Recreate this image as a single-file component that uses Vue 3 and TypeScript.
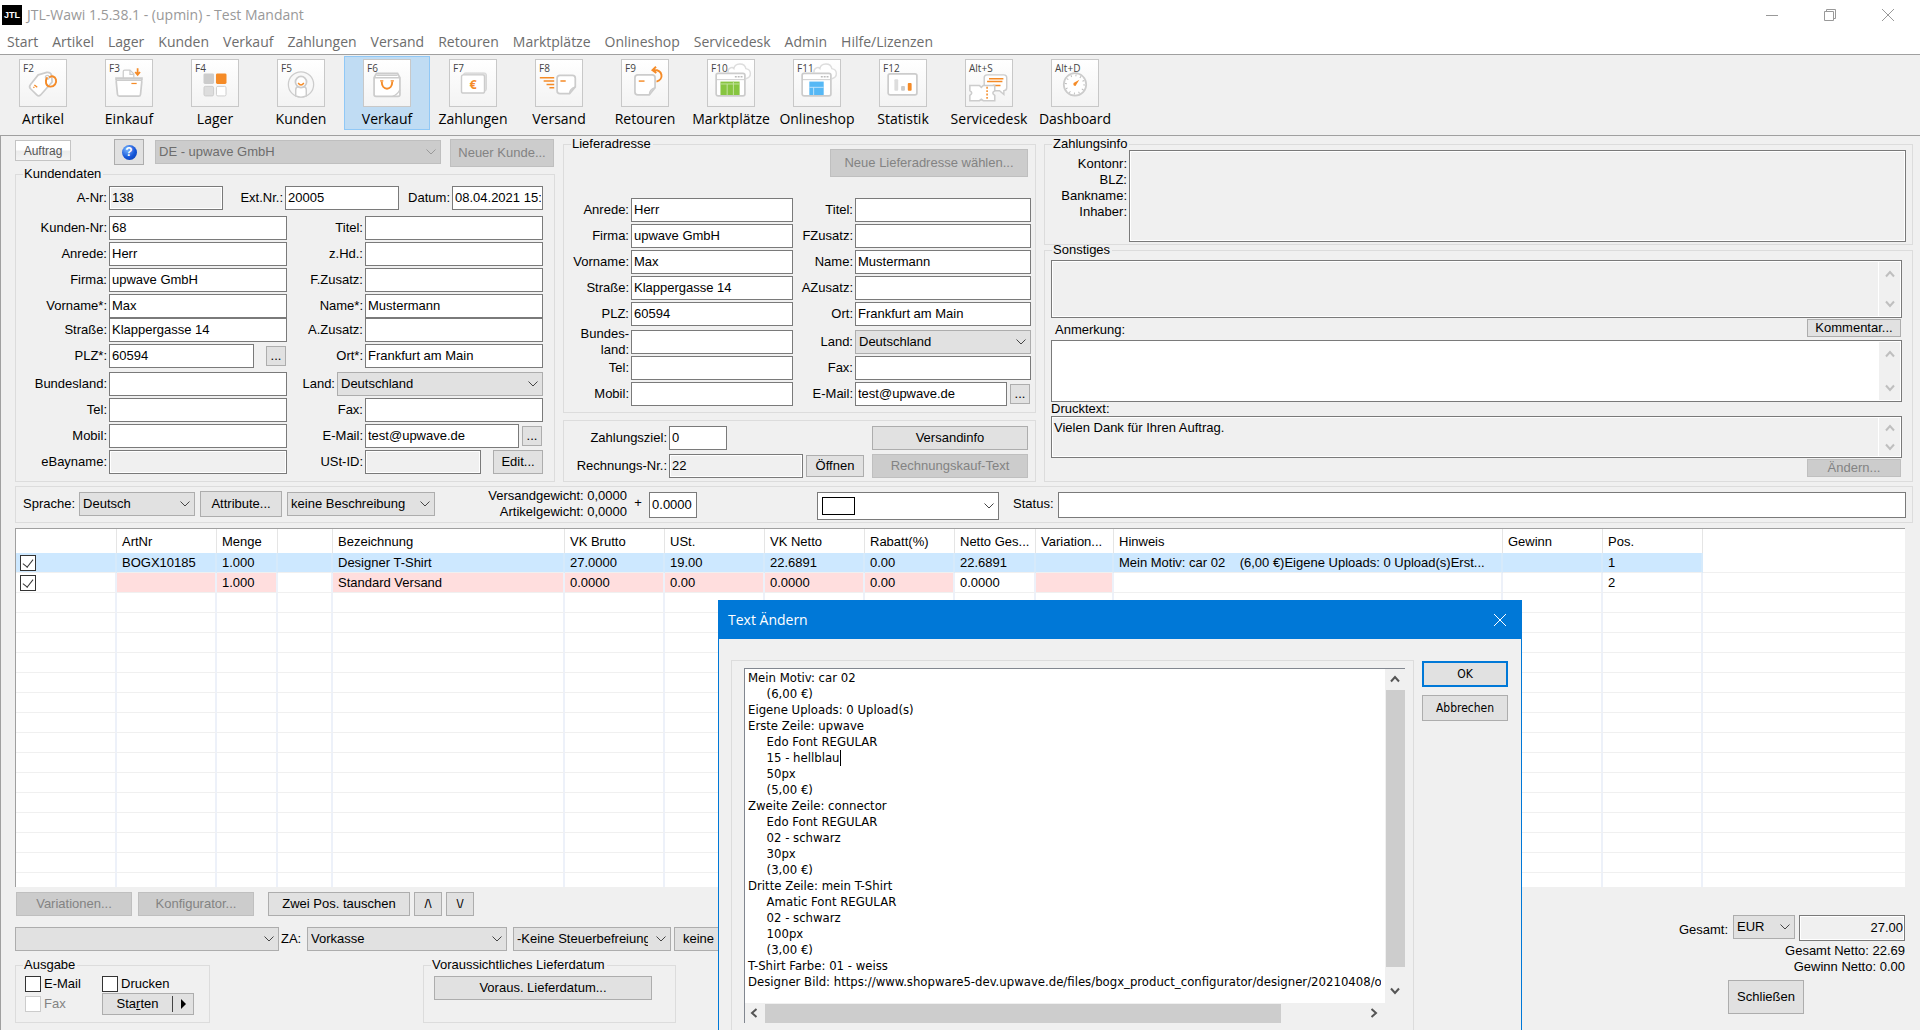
<script setup lang="ts">
import { ref } from 'vue'

interface Field {
  id: string
  label: string
  value?: string
  kind?: 'text' | 'readonly' | 'select'
  size?: string
  button?: string
  buttonLabel?: string
}

interface Tool {
  key: string
  label: string
  icon: string
  active?: boolean
}

interface Position {
  cells: string[]
  selected?: boolean
}

const menu = ['Start', 'Artikel', 'Lager', 'Kunden', 'Verkauf', 'Zahlungen', 'Versand', 'Retouren', 'Marktplätze', 'Onlineshop', 'Servicedesk', 'Admin', 'Hilfe/Lizenzen']

const tools: Tool[] = [
  { key: 'F2', label: 'Artikel', icon: 'artikel' },
  { key: 'F3', label: 'Einkauf', icon: 'einkauf' },
  { key: 'F4', label: 'Lager', icon: 'lager' },
  { key: 'F5', label: 'Kunden', icon: 'kunden' },
  { key: 'F6', label: 'Verkauf', icon: 'verkauf', active: true },
  { key: 'F7', label: 'Zahlungen', icon: 'zahlungen' },
  { key: 'F8', label: 'Versand', icon: 'versand' },
  { key: 'F9', label: 'Retouren', icon: 'retouren' },
  { key: 'F10', label: 'Marktplätze', icon: 'markt' },
  { key: 'F11', label: 'Onlineshop', icon: 'shop' },
  { key: 'F12', label: 'Statistik', icon: 'statistik' },
  { key: 'Alt+S', label: 'Servicedesk', icon: 'service' },
  { key: 'Alt+D', label: 'Dashboard', icon: 'dashboard' },
]

const customer: Field[] = [
  { id: 'k-nr', label: 'Kunden-Nr:', value: '68' },
  { id: 'k-titel', label: 'Titel:' },
  { id: 'k-anrede', label: 'Anrede:', value: 'Herr' },
  { id: 'k-zhd', label: 'z.Hd.:' },
  { id: 'k-firma', label: 'Firma:', value: 'upwave GmbH' },
  { id: 'k-fzusatz', label: 'F.Zusatz:' },
  { id: 'k-vorname', label: 'Vorname*:', value: 'Max' },
  { id: 'k-name', label: 'Name*:', value: 'Mustermann' },
  { id: 'k-strasse', label: 'Straße:', value: 'Klappergasse 14' },
  { id: 'k-azusatz', label: 'A.Zusatz:' },
  { id: 'k-plz', label: 'PLZ*:', value: '60594', size: 'loose', button: '...', buttonLabel: 'PLZ suchen' },
  { id: 'k-ort', label: 'Ort*:', value: 'Frankfurt am Main' },
  { id: 'k-bundesland', label: 'Bundesland:' },
  { id: 'k-land', label: 'Land:', value: 'Deutschland', kind: 'select', size: 'wide' },
  { id: 'k-tel', label: 'Tel:' },
  { id: 'k-fax', label: 'Fax:' },
  { id: 'k-mobil', label: 'Mobil:' },
  { id: 'k-mail', label: 'E-Mail:', value: 'test@upwave.de', button: '...', buttonLabel: 'E-Mail schreiben' },
  { id: 'k-ebay', label: 'eBayname:', kind: 'readonly' },
  { id: 'k-ust', label: 'USt-ID:', kind: 'readonly', size: 'loose', button: 'Edit...', buttonLabel: 'USt-ID bearbeiten' },
]

const delivery: Field[] = [
  { id: 'l-anrede', label: 'Anrede:', value: 'Herr' },
  { id: 'l-titel', label: 'Titel:' },
  { id: 'l-firma', label: 'Firma:', value: 'upwave GmbH' },
  { id: 'l-fzusatz', label: 'FZusatz:' },
  { id: 'l-vorname', label: 'Vorname:', value: 'Max' },
  { id: 'l-name', label: 'Name:', value: 'Mustermann' },
  { id: 'l-strasse', label: 'Straße:', value: 'Klappergasse 14' },
  { id: 'l-azusatz', label: 'AZusatz:' },
  { id: 'l-plz', label: 'PLZ:', value: '60594' },
  { id: 'l-ort', label: 'Ort:', value: 'Frankfurt am Main' },
  { id: 'l-bundesland', label: 'Bundes-\nland:' },
  { id: 'l-land', label: 'Land:', value: 'Deutschland', kind: 'select' },
  { id: 'l-tel', label: 'Tel:' },
  { id: 'l-fax', label: 'Fax:' },
  { id: 'l-mobil', label: 'Mobil:' },
  { id: 'l-mail', label: 'E-Mail:', value: 'test@upwave.de', button: '...', buttonLabel: 'E-Mail schreiben' },
]

const columns = [
  { title: '', width: 101 },
  { title: 'ArtNr', width: 100 },
  { title: 'Menge', width: 61 },
  { title: '', width: 55 },
  { title: 'Bezeichnung', width: 232 },
  { title: 'VK Brutto', width: 100 },
  { title: 'USt.', width: 100 },
  { title: 'VK Netto', width: 100 },
  { title: 'Rabatt(%)', width: 90 },
  { title: 'Netto Ges...', width: 81 },
  { title: 'Variation...', width: 78 },
  { title: 'Hinweis', width: 389 },
  { title: 'Gewinn', width: 100 },
  { title: 'Pos.', width: 100 },
]

const positions: Position[] = [
  {
    selected: true,
    cells: ['BOGX10185', '1.000', '', 'Designer T-Shirt', '27.0000', '19.00', '22.6891', '0.00', '22.6891', '', 'Mein Motiv: car 02    (6,00 €)Eigene Uploads: 0 Upload(s)Erst...', '', '1'],
  },
  {
    cells: ['', '1.000', '', 'Standard Versand', '0.0000', '0.00', '0.0000', '0.00', '0.0000', '', '', '', '2'],
  },
]
const lockedCells = [0, 1, 3, 4, 5, 6, 7, 9]

const checked = ref([true, true])
const outMail = ref(false)
const outPrint = ref(false)

const note = ref(`Mein Motiv: car 02
     (6,00 €)
Eigene Uploads: 0 Upload(s)
Erste Zeile: upwave
     Edo Font REGULAR
     15 - hellblau
     50px
     (5,00 €)
Zweite Zeile: connector
     Edo Font REGULAR
     02 - schwarz
     30px
     (3,00 €)
Dritte Zeile: mein T-Shirt
     Amatic Font REGULAR
     02 - schwarz
     100px
     (3,00 €)
T-Shirt Farbe: 01 - weiss
Designer Bild: https://www.shopware5-dev.upwave.de/files/bogx_product_configurator/designer/20210408/order`)
</script>

<template>
  <div class="app">
    <svg class="defs" aria-hidden="true">
      <symbol id="chev" viewBox="0 0 10 6"><path d="M.5.5 5 5 9.5.5" fill="none" stroke="currentColor" /></symbol>
      <symbol id="arrow" viewBox="0 0 10 8"><path d="M1 6.500 5 2 9 6.500" fill="none" stroke="currentColor" stroke-width="2" /></symbol>
      <symbol id="cloud" viewBox="0 0 48 48">
        <path d="M21 13c-1-4 4-6.500 6-4 1-6 11-7 12.500 0 6 1 6.500 9 0 10.500" fill="#fff" stroke="#ddd" stroke-width="1.500" />
      </symbol>
      <symbol id="artikel" viewBox="0 0 48 48">
        <path d="M19 15.500 28 13q4-.5 5 3l.5 7L21.500 36.500q-2 2-4 0L11 30q-2-2 0-4.500z" fill="#fff" stroke="#ccc" stroke-width="1.800" />
        <circle cx="28.500" cy="18" r="2" fill="none" stroke="#ccc" stroke-width="1.300" />
        <path d="M28.500 18c-3 4-1.500 9.500 3 9.800 4.500.3 7-4 6-7.500-1-3-4.500-4.500-7-2" fill="none" stroke="#f58b27" stroke-width="2" />
        <path d="m15 26 3 2.500M14 28l1 1" stroke="#f58b27" stroke-width="1.300" />
      </symbol>
      <symbol id="einkauf" viewBox="0 0 48 48">
        <path d="M18 21V12q0-1.500 1.500-1.500H25l4 4V21z" fill="#fff" stroke="#ccc" stroke-width="1.300" />
        <path d="M25 10.500V15h4" fill="none" stroke="#ccc" stroke-width="1.300" />
        <path d="M10.500 21v-2h27v2M12 21h24q1.500 0 1.300 2L36 36q-.2 1.800-2 1.800H14q-1.800 0-2-1.800l-1.300-13q-.2-2 1.300-2z" fill="#fff" stroke="#ccc" stroke-width="1.800" />
        <path d="M33 8.500v6M30.500 12.500 33 15.500l2.500-3" fill="none" stroke="#f58b27" stroke-width="1.800" />
        <path d="M26.500 24.500h5.500" stroke="#f58b27" stroke-width="1.300" />
      </symbol>
      <symbol id="lager" viewBox="0 0 48 48">
        <rect x="12" y="14" width="11" height="11" rx="1.500" fill="#ccc" />
        <rect x="25" y="14" width="11" height="11" rx="1.500" fill="#f58b27" />
        <rect x="12.500" y="27.500" width="10" height="10" rx="1.500" fill="#ddd" stroke="#ccc" />
        <rect x="25.500" y="27.500" width="10" height="10" rx="1.500" fill="#fff" stroke="#ccc" />
      </symbol>
      <symbol id="kunden" viewBox="0 0 48 48">
        <circle cx="24" cy="25.500" r="13.200" fill="#f8f8f8" stroke="#ccc" stroke-width="1.300" />
        <path d="M18.500 37.500V31q0-3 3-3h5q3 0 3 3v6.500q-5.500 2.500-11 0z" fill="#fff" stroke="#ccc" stroke-width="1.500" />
        <circle cx="24" cy="23" r="5.800" fill="#fff" stroke="#ccc" stroke-width="1.800" />
        <path d="M21 24q3 4 6 0" fill="none" stroke="#f58b27" stroke-width="1.500" />
      </symbol>
      <symbol id="verkauf" viewBox="0 0 48 48">
        <path d="M10.500 18.500 13 14h22l2.500 4.500V36q0 2-2 2h-23q-2 0-2-2z" fill="#fff" stroke="#ccc" stroke-width="1.800" />
        <path d="M10.500 18.500h27M13 16h22" stroke="#ccc" stroke-width="1.500" />
        <path d="M30 38q5-2 7.500-7" fill="none" stroke="#ccc" stroke-width="1.500" />
        <path d="M18.500 22.500c0 10 11 10 11 0" fill="none" stroke="#f58b27" stroke-width="2" />
        <path d="M16.800 21.800h3.400M27.800 21.800h3.400" stroke="#f58b27" stroke-width="1.500" />
      </symbol>
      <symbol id="zahlungen" viewBox="0 0 48 48">
        <rect x="14" y="13.500" width="24" height="19" rx="2" fill="#e2e2e2" stroke="#d4d4d4" />
        <rect x="12" y="15.500" width="24" height="19" rx="2" fill="#fff" stroke="#ccc" stroke-width="1.500" />
        <text x="24" y="30" text-anchor="middle" font-family="Open Sans, sans-serif" font-weight="700" font-size="13" fill="#f58b27">€</text>
      </symbol>
      <symbol id="versand" viewBox="0 0 48 48">
        <path d="M25 16h13q3 0 3 3v9l-6 7H25q-3 0-3-3V19q0-3 3-3z" fill="#fff" stroke="#ccc" stroke-width="1.800" />
        <path d="M35 35q0-5 6-7" fill="none" stroke="#ccc" stroke-width="1.500" />
        <path d="M4 18.500h15M8 22h11M11 25.500h8M14 29h5M25.500 22h5.500" stroke="#f58b27" stroke-width="1.600" />
      </symbol>
      <symbol id="retouren" viewBox="0 0 48 48">
        <path d="M16.500 15.500h15q3 0 3 3V29l-6 7.500h-12q-3 0-3-3v-15q0-3 3-3z" fill="#fff" stroke="#ccc" stroke-width="1.800" />
        <path d="M28.500 36.500q0-5.500 6-7.500" fill="none" stroke="#ccc" stroke-width="1.500" />
        <path d="M17.500 22h6" stroke="#f58b27" stroke-width="1.500" />
        <path d="M32 10.500c11-1 12 10 4 12M35.500 7 31.800 10.500l4 3" fill="none" stroke="#f58b27" stroke-width="2" />
      </symbol>
      <symbol id="markt" viewBox="0 0 48 48">
        <use href="#cloud" />
        <rect x="8.500" y="14" width="30" height="23.500" rx="2" fill="#fff" stroke="#ccc" stroke-width="1.800" />
        <path d="M8.500 20.500h30" stroke="#ccc" /><path d="M28 17.500h2m1 0h2m1 0h2" stroke="#bbb" stroke-width="1.500" />
        <path d="M13 22.500h20v14H13z" fill="#87c540" /><path d="M13 25h20M20 25v12M26.500 22v15" stroke="#c5e3a2" />
      </symbol>
      <symbol id="shop" viewBox="0 0 48 48">
        <use href="#cloud" />
        <rect x="8.500" y="14" width="30" height="23.500" rx="2" fill="#fff" stroke="#ccc" stroke-width="1.800" />
        <path d="M8.500 20.500h30" stroke="#ccc" /><path d="M28 17.500h2m1 0h2m1 0h2" stroke="#bbb" stroke-width="1.500" />
        <path d="M16 22.500h15v14H16z" fill="#56b8f5" /><path d="M16 28.500h15M20.500 28.500v8" stroke="#c2e5fc" />
      </symbol>
      <symbol id="statistik" viewBox="0 0 48 48">
        <rect x="8.500" y="14.500" width="30" height="22" rx="2" fill="#fff" stroke="#ccc" stroke-width="1.800" />
        <rect x="15" y="20" width="4" height="12" rx="1" fill="#ddd" />
        <rect x="22" y="27" width="4" height="5" rx="1" fill="#ccc" />
        <rect x="29" y="24" width="4" height="8" rx="1" fill="#f58b27" />
      </symbol>
      <symbol id="service" viewBox="0 0 48 48">
        <path d="M22 15.500h17.500q3 0 3 3V29q0 3-3 3v4L35 32H22q-3 0-3-3V18.500q0-3 3-3z" fill="#fff" stroke="#ccc" stroke-width="1.500" />
        <path d="M24 19.500h15M22 22.500h16M28 26.500h8" stroke="#f58b27" stroke-width="1.600" />
        <path d="M4 26.500h10l2 2 2-2h12v5.500q-4 2.500 0 5v5.500H18l-2-1.500-2 1.500H4V37q4-2.500 0-5z" fill="#fff" stroke="#ccc" stroke-width="1.600" />
        <path d="M22 28v14" stroke="#f58b27" stroke-width="1.600" stroke-dasharray="2 1.500" />
      </symbol>
      <symbol id="dashboard" viewBox="0 0 48 48">
        <circle cx="24" cy="25.500" r="11.700" fill="#fff" stroke="#ccc" stroke-width="1.800" />
        <circle cx="24" cy="25.500" r="9.500" fill="none" stroke="#bbb" stroke-width="2" stroke-dasharray="1 4" />
        <path d="m28.500 20.500-6 3.500q-.8 3 2 3z" fill="#f58b27" />
      </symbol>
    </svg>

    <header class="titlebar">
      <span class="logo" aria-hidden="true">JTL</span>
      <h1>JTL-Wawi 1.5.38.1 - (upmin) - Test Mandant</h1>
      <div class="winctl">
        <button aria-label="Minimieren"><svg viewBox="0 0 14 14"><path d="M1 7.500h12" /></svg></button>
        <button aria-label="Wiederherstellen"><svg viewBox="0 0 14 14"><path d="M1.500 3.500h9v9h-9zM3.500 3.500v-2h9v9h-2" /></svg></button>
        <button aria-label="Schließen"><svg viewBox="0 0 14 14"><path d="m1 1 12 12M13 1 1 13" /></svg></button>
      </div>
    </header>

    <nav class="menu"><button v-for="m in menu" :key="m">{{ m }}</button></nav>

    <nav class="toolbar">
      <button v-for="t in tools" :key="t.key" class="tool" :class="{ active: t.active }">
        <span class="tile">
          <span class="key">{{ t.key }}</span>
          <svg><use :href="'#' + t.icon" /></svg>
        </span>
        <span>{{ t.label }}</span>
      </button>
    </nav>

    <main>
      <div class="columns">
        <section class="column">
          <div class="order-head">
            <button class="tab">Auftrag</button>
            <button class="btn help" aria-label="Hilfe"><span>?</span></button>
            <span class="combo disabled company">
              <select aria-label="Firma" disabled><option>DE - upwave GmbH</option></select>
              <svg class="chev"><use href="#chev" /></svg>
            </span>
            <button class="btn new-customer" disabled>Neuer Kunde...</button>
          </div>
          <fieldset class="customer">
            <legend>Kundendaten</legend>
            <div class="row-first">
              <label for="a-nr">A-Nr:</label><input id="a-nr" readonly value="138">
              <label for="ext-nr">Ext.Nr.:</label><input id="ext-nr" value="20005">
              <label for="datum">Datum:</label><input id="datum" value="08.04.2021 15:">
            </div>
            <div class="fields">
              <div v-for="f in customer" :key="f.id" class="pair">
                <label :for="f.id">{{ f.label }}</label>
                <div class="control" :class="f.size">
                  <span v-if="f.kind === 'select'" class="combo">
                    <select :id="f.id"><option>{{ f.value }}</option></select>
                    <svg class="chev"><use href="#chev" /></svg>
                  </span>
                  <input v-else :id="f.id" :readonly="f.kind === 'readonly'" :value="f.value">
                  <button v-if="f.button" class="btn" :class="f.button === '...' ? 'dots' : 'edit'" :aria-label="f.buttonLabel">{{ f.button }}</button>
                </div>
              </div>
            </div>
          </fieldset>
        </section>

        <section class="column gap">
          <fieldset class="delivery">
            <legend>Lieferadresse</legend>
            <button class="btn choose" disabled>Neue Lieferadresse wählen...</button>
            <div class="fields">
              <div v-for="f in delivery" :key="f.id" class="pair">
                <label :for="f.id">{{ f.label }}</label>
                <div class="control">
                  <span v-if="f.kind === 'select'" class="combo">
                    <select :id="f.id"><option>{{ f.value }}</option></select>
                    <svg class="chev"><use href="#chev" /></svg>
                  </span>
                  <input v-else :id="f.id" :value="f.value">
                  <button v-if="f.button" class="btn dots" :aria-label="f.buttonLabel">{{ f.button }}</button>
                </div>
              </div>
            </div>
          </fieldset>
          <div class="box invoice">
            <label for="ziel">Zahlungsziel:</label>
            <input id="ziel" class="target" value="0">
            <button class="btn info">Versandinfo</button>
            <label for="rnr">Rechnungs-Nr.:</label>
            <input id="rnr" readonly value="22">
            <button class="btn open">Öffnen</button>
            <button class="btn" disabled>Rechnungskauf-Text</button>
          </div>
        </section>

        <section class="column">
          <fieldset class="payment">
            <legend>Zahlungsinfo</legend>
            <div class="bank"><span>Kontonr:</span><span>BLZ:</span><span>Bankname:</span><span>Inhaber:</span></div>
            <textarea aria-label="Zahlungsinfo" readonly></textarea>
          </fieldset>
          <fieldset class="misc">
            <legend>Sonstiges</legend>
            <div class="memo locked memo-a">
              <textarea aria-label="Sonstiges" readonly></textarea>
              <span class="bar"><svg><use href="#arrow" /></svg><svg class="down"><use href="#arrow" /></svg></span>
            </div>
            <div class="memo-head">
              <label for="anmerkung">Anmerkung:</label>
              <button class="btn">Kommentar...</button>
            </div>
            <div class="memo memo-b">
              <textarea id="anmerkung"></textarea>
              <span class="bar"><svg><use href="#arrow" /></svg><svg class="down"><use href="#arrow" /></svg></span>
            </div>
            <label class="print-label" for="drucktext">Drucktext:</label>
            <div class="memo locked memo-c">
              <textarea id="drucktext" readonly>Vielen Dank für Ihren Auftrag.</textarea>
              <span class="bar"><svg><use href="#arrow" /></svg><svg class="down"><use href="#arrow" /></svg></span>
            </div>
            <div class="memo-foot"><button class="btn" disabled>Ändern...</button></div>
          </fieldset>
        </section>
      </div>

      <div class="box options">
        <label for="sprache">Sprache:</label>
        <span class="combo language">
          <select id="sprache"><option>Deutsch</option></select>
          <svg class="chev"><use href="#chev" /></svg>
        </span>
        <button class="btn attributes">Attribute...</button>
        <span class="combo description">
          <select aria-label="Beschreibung"><option>keine Beschreibung</option></select>
          <svg class="chev"><use href="#chev" /></svg>
        </span>
        <div class="weights"><span>Versandgewicht: 0,0000</span><span>Artikelgewicht: 0,0000</span></div>
        <span class="plus">+</span>
        <input class="extra" aria-label="Zusatzgewicht" value="0.0000">
        <span class="combo colour">
          <select aria-label="Farbe"><option></option></select>
          <span class="swatch"></span>
          <svg class="chev"><use href="#chev" /></svg>
        </span>
        <label for="status">Status:</label>
        <input id="status" class="status">
      </div>

      <table>
        <colgroup>
          <col v-for="(c, i) in columns" :key="i" :style="{ width: c.width + 'px' }">
          <col>
        </colgroup>
        <thead>
          <tr><th v-for="(c, i) in columns" :key="i">{{ c.title }}</th><th class="rest"></th></tr>
        </thead>
        <tbody>
          <tr v-for="(p, r) in positions" :key="r" :class="{ selected: p.selected }">
            <td class="tick"><input v-model="checked[r]" type="checkbox" :aria-label="'Position ' + (r + 1)"></td>
            <td v-for="(c, i) in p.cells" :key="i" :class="{ locked: !p.selected && lockedCells.includes(i) }">{{ c }}</td>
            <td class="rest"></td>
          </tr>
          <tr v-for="n in 15" :key="'e' + n" :class="{ cut: n === 15 }">
            <td v-for="(c, i) in columns" :key="i"></td>
            <td class="rest"></td>
          </tr>
        </tbody>
      </table>

      <footer>
        <div class="foot-left">
          <div class="line actions">
            <button class="btn medium" disabled>Variationen...</button>
            <button class="btn medium" disabled>Konfigurator...</button>
            <button class="btn swap">Zwei Pos. tauschen</button>
            <button class="btn small" aria-label="Nach oben">/\</button>
            <button class="btn small" aria-label="Nach unten">\/</button>
          </div>
          <div class="line payment-line">
            <span class="combo ship">
              <select aria-label="Versandart"><option></option></select>
              <svg class="chev"><use href="#chev" /></svg>
            </span>
            <label for="za">ZA:</label>
            <span class="combo za">
              <select id="za"><option>Vorkasse</option></select>
              <svg class="chev"><use href="#chev" /></svg>
            </span>
            <span class="combo tax">
              <select aria-label="Steuerbefreiung"><option>-Keine Steuerbefreiung-</option></select>
              <svg class="chev"><use href="#chev" /></svg>
            </span>
            <button class="btn none">keine</button>
          </div>
          <div class="groups">
            <fieldset class="output">
              <legend>Ausgabe</legend>
              <label><input v-model="outMail" type="checkbox">E-Mail</label>
              <label><input v-model="outPrint" type="checkbox">Drucken</label>
              <label class="off"><input type="checkbox" disabled>Fax</label>
              <button class="btn start"><span>Sta<u>r</u>ten</span><i></i></button>
            </fieldset>
            <fieldset class="date">
              <legend>Voraussichtliches Lieferdatum</legend>
              <button class="btn">Voraus. Lieferdatum...</button>
            </fieldset>
          </div>
        </div>
        <div class="totals">
          <div class="total">
            <label for="gesamt">Gesamt:</label>
            <span class="combo currency">
              <select aria-label="Währung"><option>EUR</option></select>
              <svg class="chev"><use href="#chev" /></svg>
            </span>
            <input id="gesamt" readonly value="27.00">
          </div>
          <span>Gesamt Netto: 22.69</span>
          <span>Gewinn Netto: 0.00</span>
          <button class="btn close">Schließen</button>
        </div>
      </footer>
    </main>

    <div class="dialog" role="dialog" aria-labelledby="dialog-title">
      <div class="dialog-title">
        <h2 id="dialog-title">Text Ändern</h2>
        <button aria-label="Dialog schließen"><svg viewBox="0 0 14 14"><path d="m1 1 12 12M13 1 1 13" /></svg></button>
      </div>
      <div class="dialog-body">
        <div class="frame">
          <div class="editor">
            <textarea v-model="note" aria-label="Text" wrap="off" spellcheck="false"></textarea>
            <span class="caret"></span>
            <div class="vbar">
              <svg><use href="#arrow" /></svg><i></i><svg class="down"><use href="#arrow" /></svg>
            </div>
            <div class="hbar">
              <svg class="left"><use href="#arrow" /></svg><i></i><svg class="right"><use href="#arrow" /></svg>
            </div>
          </div>
        </div>
        <div class="dialog-buttons">
          <button class="btn ok">OK</button>
          <button class="btn">Abbrechen</button>
        </div>
      </div>
    </div>
  </div>
</template>

<style>
body {
  margin: 0;
  background: #f0f0f0;
}
</style>

<style scoped>
* {
  box-sizing: border-box;
}
.app {
  position: relative;
  display: flex;
  flex-direction: column;
  min-height: 100vh;
  overflow: hidden;
  background: #f0f0f0;
  color: #000;
  font: 13px/16px "Liberation Sans", Arial, sans-serif;
}
.defs {
  position: absolute;
  width: 0;
  height: 0;
}
button,
input,
select,
textarea {
  margin: 0;
  font: inherit;
  color: inherit;
}
svg {
  display: block;
}

/* window chrome */
.titlebar {
  display: flex;
  align-items: center;
  height: 29px;
  padding: 0 3px 0 2px;
  background: #fff;
}
.logo {
  width: 20px;
  height: 20px;
  background: #000;
  color: #fff;
  font: 700 9px/20px "Liberation Sans", Arial, sans-serif;
  text-align: center;
}
h1 {
  flex: 1;
  margin: 0 0 0 5px;
  font: 14px/20px "Open Sans", "Noto Sans", sans-serif;
  color: #999;
}
.winctl {
  display: flex;
}
.winctl button {
  display: flex;
  justify-content: center;
  width: 58px;
  padding: 0;
  border: 0;
  background: none;
}
.winctl svg,
.dialog-title svg {
  width: 14px;
  height: 14px;
  fill: none;
  stroke: #999;
}
.menu {
  display: flex;
  gap: 14px;
  height: 26px;
  padding-left: 7px;
  border-bottom: 1px solid #a0a0a0;
  background: #fff;
}
.menu button {
  padding: 0;
  border: 0;
  background: none;
  font: 14px/24px "Open Sans", "Noto Sans", sans-serif;
  color: #6d6d6d;
}
.toolbar {
  display: flex;
  height: 80px;
  padding-top: 1px;
}
.tool {
  display: flex;
  flex: none;
  flex-direction: column;
  align-items: center;
  width: 86px;
  height: 74px;
  padding: 2px 0 0;
  border: 1px solid transparent;
  background: none;
  font: 14px/24px "Open Sans", "Noto Sans", sans-serif;
  white-space: nowrap;
}
.tool.active {
  border-color: #90c8f6;
  background: #c0dcf3;
}
.tile {
  position: relative;
  width: 48px;
  height: 48px;
  border: 1px solid #c8c8c8;
  background: linear-gradient(#fff, #f3f3f3);
}
.tile svg {
  width: 46px;
  height: 46px;
}
.key {
  position: absolute;
  top: 1px;
  left: 3px;
  font-size: 10px;
  line-height: 14px;
  color: #444;
}

/* shared controls */
.btn {
  display: block;
  height: 24px;
  padding: 0;
  border: 1px solid #adadad;
  border-radius: 0;
  background: #e1e1e1;
  white-space: nowrap;
}
.btn:disabled {
  border-color: #bfbfbf;
  background: #ccc;
  color: #838383;
}
input:not([type='checkbox']) {
  min-width: 0;
  height: 24px;
  padding: 0 1px 2px 2px;
  border: 1px solid #7a7a7a;
  border-radius: 0;
  outline: 0;
  background: #fff;
}
input:read-only:not([type='checkbox']) {
  background: #f0f0f0;
  box-shadow: inset 0 0 0 1px #fff;
}
.combo {
  position: relative;
  display: block;
  flex: none;
  height: 24px;
}
.combo select {
  display: block;
  width: 100%;
  height: 100%;
  padding: 0 22px 0 3px;
  border: 1px solid #adadad;
  border-radius: 0;
  background: #e1e1e1;
  appearance: none;
}
.combo.disabled select {
  border-color: #bfbfbf;
  background: #ccc;
  color: #6d6d6d;
  opacity: 1;
}
.chev {
  position: absolute;
  top: 50%;
  right: 5px;
  width: 10px;
  height: 6px;
  margin-top: -3px;
  color: #444;
  pointer-events: none;
}
.disabled .chev {
  color: #999;
}
input[type='checkbox'] {
  flex: none;
  width: 16px;
  height: 16px;
  margin: 0;
  border: 1px solid #333;
  background: #fff;
  appearance: none;
}
input[type='checkbox']:checked::after {
  content: '';
  display: block;
  width: 5px;
  height: 9px;
  margin: 1px 4px;
  border: solid #333;
  border-width: 0 1px 1px 0;
  transform: rotate(38deg);
}
input[type='checkbox']:disabled {
  border-color: #ccc;
}
fieldset {
  --inset: 0px;
  min-width: 0;
  margin: 0;
  padding: 0 0 0 var(--inset);
  border: 1px solid #dcdcdc;
}
legend {
  height: 10px;
  margin-left: calc(7px - var(--inset));
  padding: 0 2px 0 1px;
  line-height: 10px;
  white-space: nowrap;
}
.box {
  border: 1px solid #dcdcdc;
}

/* order form */
main {
  flex: 1;
  padding: 3px 7px 7px 14px;
  border-top: 1px solid #a0a0a0;
  border-left: 1px solid #a0a0a0;
  border-bottom: 1px solid #fff;
}
.columns {
  display: grid;
  grid-template-columns: 540px 473px minmax(0, 1fr);
  column-gap: 8px;
}
.column {
  display: flex;
  flex-direction: column;
}
.column.gap {
  gap: 7px;
}
.order-head {
  display: flex;
  height: 30px;
}
.tab {
  width: 56px;
  height: 21px;
  margin: 1px 43px 0 0;
  padding: 0;
  border: 1px solid #c4c4c4;
  background: linear-gradient(#fff 45%, #ececec 55%, #f4f4f4);
  color: #555;
  font-size: 12px;
}
.help {
  display: grid;
  place-items: center;
  width: 30px;
  height: 26px;
  margin-right: 11px;
}
.help span {
  width: 15px;
  height: 15px;
  border-radius: 50%;
  background: radial-gradient(circle at 35% 30%, #7db6ff, #1556d8 55%, #0a3aa8);
  color: #fff;
  font-weight: 700;
  font-size: 12px;
  line-height: 15px;
}
.company {
  width: 286px;
  margin: 1px 9px 0 0;
}
.new-customer {
  width: 104px;
  height: 28px;
}
.customer {
  --inset: 5px;
  flex: 1;
  padding-top: 7px;
  padding-bottom: 6px;
}
.row-first {
  display: grid;
  grid-template-columns: 88px 114px 62px 114px 53px 91px;
}
.row-first label,
.pair label {
  padding-right: 2px;
  line-height: 24px;
  text-align: right;
}
.fields {
  display: grid;
}
.customer .fields {
  grid-template-columns: 266px 256px;
  grid-template-rows: repeat(3, 26px) 24px 26px 28px repeat(3, 26px) 24px;
  margin-top: 6px;
}
.delivery .fields {
  grid-template-columns: 225px 238px;
  grid-template-rows: repeat(4, 26px) 28px repeat(2, 26px) 24px;
  margin-top: 21px;
}
.pair {
  display: flex;
  height: 24px;
}
.pair label {
  flex: 1;
  white-space: nowrap;
}
.control {
  display: flex;
  flex: none;
  align-items: center;
  gap: 3px;
  width: 178px;
}
.control input,
.control .combo {
  flex: 1;
}
.control.wide {
  width: 206px;
}
.control.loose {
  gap: 12px;
}
.dots {
  width: 20px;
  height: 20px;
  margin-right: 1px;
}
.edit {
  width: 50px;
}
.delivery {
  --inset: 4px;
  padding-bottom: 6px;
}
.delivery .choose {
  width: 198px;
  height: 28px;
  margin: 0 7px 0 auto;
}
.delivery .control {
  width: 162px;
}
.delivery .pair:nth-child(even) .control {
  width: 176px;
}
.delivery .pair:nth-child(11) label {
  line-height: 16px;
  margin-top: -4px;
  white-space: pre;
}
.invoice {
  display: grid;
  flex: 1;
  grid-template-columns: 101px 134px 58px 156px;
  gap: 4px 0;
  align-content: start;
  padding: 5px 0 2px 4px;
}
.invoice label {
  padding-right: 2px;
  line-height: 24px;
  text-align: right;
}
.invoice .target {
  width: 58px;
}
.invoice .info {
  grid-column: 4;
}
.invoice .btn:last-child,
.invoice .info {
  margin-left: 11px;
  width: 156px;
}
.invoice .open {
  width: 58px;
  height: 22px;
  margin: 1px 0 0 3px;
}

/* payment and remarks */
.payment {
  display: flex;
  height: 106px;
  padding: 1px 6px 2px 0;
}
.bank {
  display: flex;
  flex: none;
  flex-direction: column;
  width: 84px;
  padding: 6px 2px 0 0;
  text-align: right;
}
.payment textarea {
  flex: 1;
}
textarea {
  display: block;
  height: 92px;
  padding: 2px;
  border: 1px solid #7a7a7a;
  border-radius: 0;
  outline: 0;
  resize: none;
  background: #f0f0f0;
  box-shadow: inset 0 0 0 1px #fff;
}
.misc {
  --inset: 6px;
  flex: 1;
  padding-top: 5px;
  padding-right: 10px;
  padding-bottom: 4px;
}
.memo {
  display: flex;
  border: 1px solid #7a7a7a;
  background: #fff;
}
.memo.locked {
  background: #f0f0f0;
  box-shadow: inset 0 0 0 1px #fff;
}
.memo textarea {
  flex: 1;
  height: 100%;
  padding: 3px 2px;
  border: 0;
  background: none;
  box-shadow: none;
}
.memo-a {
  height: 58px;
}
.memo-b {
  height: 62px;
}
.memo-c {
  height: 42px;
}
.bar {
  display: flex;
  flex: none;
  flex-direction: column;
  justify-content: space-between;
  align-items: center;
  width: 23px;
  padding: 8px 0;
  border: 1px solid #fff;
  background: #f0f0f0;
  color: #bfbfbf;
}
.memo-c .bar {
  padding: 6px 0 5px;
}
.bar svg {
  width: 10px;
  height: 8px;
}
.down {
  transform: rotate(180deg);
}
.left {
  transform: rotate(-90deg);
}
.right {
  transform: rotate(90deg);
}
.memo-head {
  display: flex;
  justify-content: space-between;
  height: 22px;
  padding: 1px 1px 0 4px;
}
.memo-head label {
  line-height: 22px;
}
.memo-head .btn,
.memo-foot .btn {
  width: 94px;
  height: 18px;
  line-height: 14px;
}
.print-label {
  display: block;
  height: 14px;
  line-height: 14px;
}
.memo-foot {
  display: flex;
  justify-content: flex-end;
  padding: 1px 1px 0 0;
}

/* options strip */
.options {
  display: flex;
  align-items: flex-start;
  margin-top: 4px;
  padding: 5px 6px 2px 7px;
}
.options label {
  padding-right: 4px;
  line-height: 24px;
}
.language {
  width: 116px;
}
.attributes {
  width: 82px;
  height: 26px;
  margin: -1px 5px 0;
}
.description {
  width: 148px;
}
.weights {
  display: flex;
  flex-direction: column;
  width: 192px;
  margin-top: -4px;
  text-align: right;
}
.plus {
  width: 22px;
  line-height: 22px;
  text-align: center;
}
.options .extra {
  width: 48px;
  height: 26px;
}
.colour {
  width: 182px;
  height: 28px;
  margin: 0 14px 0 120px;
}
.colour select {
  border-color: #7a7a7a;
  background: #fff;
}
.swatch {
  position: absolute;
  top: 5px;
  left: 5px;
  width: 33px;
  height: 18px;
  border: 1px solid #000;
  pointer-events: none;
}
.options .status {
  flex: 1;
  height: 26px;
}

/* positions */
table {
  width: calc(100% - 8px);
  margin-top: 5px;
  border: solid #a0a0a0;
  border-width: 1px 0 0 1px;
  border-spacing: 0;
  table-layout: fixed;
  background: #fff;
}
th,
td {
  height: 20px;
  padding: 0 0 0 5px;
  overflow: hidden;
  border-right: 2px solid #edf1f9;
  border-bottom: 1px solid #f0f0f0;
  font-weight: 400;
  line-height: 19px;
  text-align: left;
  white-space: pre;
}
th {
  height: 24px;
  padding-top: 1px;
  border-right: 1px solid #e5e5e5;
  border-bottom: 0;
}
td:last-child,
th:last-child {
  border-right: 0;
}
.selected td:not(.rest) {
  border-color: #c6e0f8 #d6eafb #f0f0f0;
  background: #cde8ff;
}
td.locked {
  background: #ffdede;
  background-clip: padding-box;
}
td.tick {
  padding-left: 4px;
}
.tick input {
  display: block;
}
.cut td {
  height: 14px;
  border-bottom: 0;
}

/* footer */
footer {
  display: flex;
  justify-content: space-between;
}
.foot-left {
  padding-top: 5px;
}
.line {
  display: flex;
}
.actions {
  gap: 4px;
  padding-left: 1px;
}
.medium {
  width: 116px;
  margin-right: 2px;
}
.swap {
  width: 142px;
  margin-left: 8px;
}
.small {
  width: 28px;
}
.payment-line {
  margin-top: 11px;
}
.ship {
  width: 264px;
}
.payment-line label {
  width: 28px;
  padding-left: 2px;
  line-height: 24px;
}
.za {
  width: 200px;
  margin-right: 6px;
}
.tax {
  width: 158px;
  margin-right: 3px;
}
.none {
  width: 90px;
  padding-left: 8px;
  text-align: left;
}
.groups {
  display: flex;
  align-items: flex-start;
  gap: 213px;
  margin-top: 9px;
}
.output {
  --inset: 9px;
  display: grid;
  grid-template-columns: 77px 92px;
  gap: 1px 0;
  align-content: start;
  width: 195px;
  height: 63px;
  padding-top: 6px;
}
.output label {
  display: flex;
  gap: 3px;
  height: 16px;
}
.output label.off {
  margin-top: 3px;
  color: #838383;
}
.start {
  display: flex;
  align-items: center;
  width: 92px;
  height: 22px;
}
.start span {
  width: 70px;
  border-right: 1px solid #444;
  text-align: center;
}
.start i {
  margin-left: 8px;
  border: solid transparent;
  border-width: 5px 0 5px 5px;
  border-left-color: #000;
}
.date {
  --inset: 10px;
  width: 253px;
  height: 63px;
  padding-top: 6px;
}
.date .btn {
  width: 218px;
}
.totals {
  display: flex;
  flex-direction: column;
  align-items: flex-end;
  padding: 28px 8px 0 0;
}
.total {
  display: flex;
  align-items: flex-start;
  margin-bottom: 1px;
}
.total label {
  padding-right: 5px;
  line-height: 29px;
}
.total input,
.total .combo {
  margin-top: 0;
}
.currency {
  width: 62px;
  margin-right: 4px;
}
.total {
  height: 27px;
}
.total input {
  width: 106px;
  height: 26px;
  text-align: right;
}
.close {
  width: 76px;
  height: 34px;
  margin: 5px 101px 0 0;
}

/* dialog */
.dialog {
  position: absolute;
  top: 600px;
  bottom: 0;
  left: 718px;
  width: 804px;
  overflow: hidden;
  border: solid #0078d7;
  border-width: 0 1px;
  background: #f0f0f0;
  font: 12px/16px "DejaVu Sans Condensed", "DejaVu Sans", sans-serif;
}
.dialog-title {
  display: flex;
  align-items: center;
  justify-content: space-between;
  height: 39px;
  padding: 0 14px 0 9px;
  background: #0078d7;
  color: #fff;
}
h2 {
  margin: 0;
  font: 14px/20px "Open Sans", "Noto Sans", sans-serif;
}
.dialog-title button {
  padding: 0;
  border: 0;
  background: none;
}
.dialog-title svg {
  stroke: #fff;
}
.dialog-body {
  display: flex;
  align-items: flex-start;
  gap: 8px;
  padding: 21px 13px 0 12px;
}
.frame {
  flex: 1;
  height: 400px;
  padding: 7px 8px 0 12px;
  border: 1px solid #dcdcdc;
}
.editor {
  position: relative;
  display: grid;
  grid-template-columns: minmax(0, 1fr) 20px;
  grid-template-rows: 334px 20px;
  border: solid #828790;
  border-width: 1px 0 0 1px;
  background: #fff;
}
.editor textarea {
  width: calc(100% - 4px);
  height: 334px;
  padding: 1px 0 1px 3px;
  overflow: hidden;
  border: 0;
  background: #fff;
  box-shadow: none;
  font-size: 13px;
  white-space: pre;
}
.caret {
  position: absolute;
  top: 81px;
  left: 95px;
  width: 1px;
  height: 16px;
  background: #000;
}
.vbar {
  display: flex;
  flex-direction: column;
  align-items: center;
  padding: 6px 0 8px;
  background: #f0f0f0;
  color: #555;
}
.vbar svg,
.hbar svg {
  flex: none;
  width: 10px;
  height: 8px;
}
.vbar i {
  width: 19px;
  height: 277px;
  margin: 7px 0 auto;
  background: #cdcdcd;
}
.hbar {
  display: flex;
  grid-column: 1 / 3;
  align-items: center;
  padding: 0 26px 0 4px;
  background: #f0f0f0;
  color: #555;
}
.hbar i {
  width: 516px;
  height: 19px;
  margin: 0 auto 0 6px;
  background: #cdcdcd;
}
.dialog-buttons {
  display: flex;
  flex-direction: column;
  gap: 8px;
  width: 86px;
  padding-top: 1px;
}
.dialog-buttons .btn {
  height: 26px;
}
.dialog-buttons .ok {
  border: 2px solid #0078d7;
}
</style>
